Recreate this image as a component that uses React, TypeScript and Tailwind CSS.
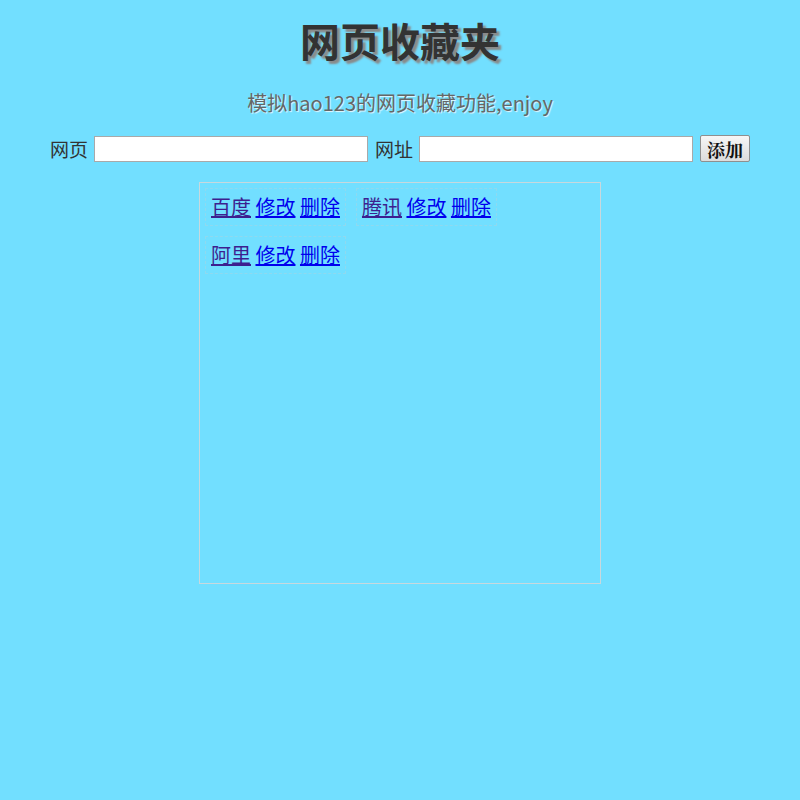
import React from "react"

const sites = [
  { name: "百度", visited: true },
  { name: "腾讯", visited: true },
  { name: "阿里", visited: true },
]

export default function App() {
  return (
    <div
      className="min-h-screen bg-[#72dfff] text-[#333]"
      style={{ fontFamily: '"Noto Sans CJK SC", "Noto Sans", sans-serif' }}
    >
      <h1 className="pt-[15px] text-center text-[40px] font-bold leading-[50px] text-[#333] [text-shadow:3px_3px_2px_#8a8a8a]">
        网页收藏夹
      </h1>

      <p className="mt-[25px] text-center text-[20px] leading-[26px] text-[#666] [text-shadow:1px_1px_1px_#e8f8ff]">
        模拟hao123的网页收藏功能,enjoy
      </p>

      <div className="mt-[19px] flex items-center justify-center gap-[6px] text-[19px] leading-[26px]">
        <span>网页</span>
        <input className="h-[26px] w-[274px] border border-[#a9a9a9] bg-white" />
        <span className="ml-[1px]">网址</span>
        <input className="h-[26px] w-[274px] border border-[#a9a9a9] bg-white" />
        <button
          className="ml-[1px] h-[27px] rounded-[2px] border border-[#8f8f8f] bg-gradient-to-b from-[#f6f6f6] to-[#dcdcdc] px-[6px] text-[18px] font-bold leading-none text-[#111]"
          style={{ fontFamily: '"Noto Serif CJK SC", "Noto Sans CJK SC", serif' }}
        >
          添加
        </button>
      </div>

      <div className="mx-auto mt-[20px] h-[402px] w-[402px] border border-[#c8d8dd]">
        <div className="flex flex-wrap items-start">
          {sites.map((s) => (
            <div
              key={s.name}
              className="m-[5px] border border-dashed border-[#8fd9ef] p-[5px] text-[20px] leading-[26px]"
            >
              <a href="#" className="text-[#3d1f8f] underline">
                {s.name}
              </a>{" "}
              <a href="#" className="text-[#0000ee] underline">
                修改
              </a>{" "}
              <a href="#" className="text-[#0000ee] underline">
                删除
              </a>
            </div>
          ))}
        </div>
      </div>
    </div>
  )
}
